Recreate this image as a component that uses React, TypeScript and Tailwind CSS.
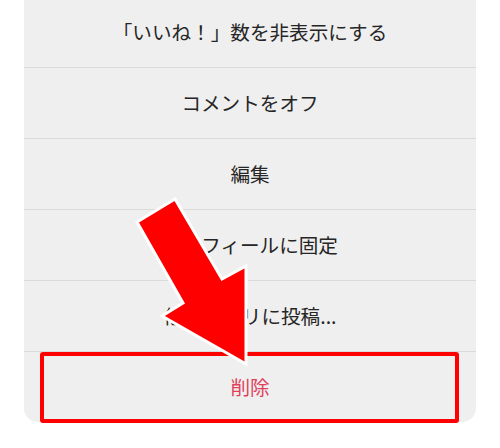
const ROWS = [
  '「いいね！」数を非表示にする',
  'コメントをオフ',
  '編集',
  'プロフィールに固定',
  '他のアプリに投稿...',
]

export default function App() {
  return (
    <div
      className="relative w-[500px] h-[448px] bg-white overflow-hidden"
      style={{ fontFamily: '"Noto Sans CJK JP", "Noto Sans", sans-serif' }}
    >
      {/* Action sheet */}
      <div className="mx-[24px] -mt-[4px] w-[452px] bg-[#efefef] rounded-b-[14px] overflow-hidden">
        {ROWS.map((label, i) => (
          <div
            key={label}
            className={`h-[71px] flex items-center justify-center text-[19.6px] text-[#262626] ${
              i > 0 ? 'border-t border-[#dadada]' : ''
            }`}
          >
            {label}
          </div>
        ))}
        <div className="h-[71px] border-t border-[#dadada] flex items-center justify-center text-[19.6px] text-[#e0405c]">
          削除
        </div>
      </div>

      {/* Highlight box */}
      <div className="absolute left-[40px] top-[352px] w-[419px] h-[71px] border-[4px] border-[#ff0000] rounded-[3px]" />

      {/* Arrow */}
      <svg className="absolute left-0 top-0" width="500" height="448" viewBox="0 0 500 448">
        <polygon
          points="137,222 175,199 222,279 246,266 246,364 162,316 183,303"
          fill="#ff0000"
          stroke="#ffffff"
          strokeWidth="3"
          strokeLinejoin="miter"
        />
      </svg>
    </div>
  )
}
